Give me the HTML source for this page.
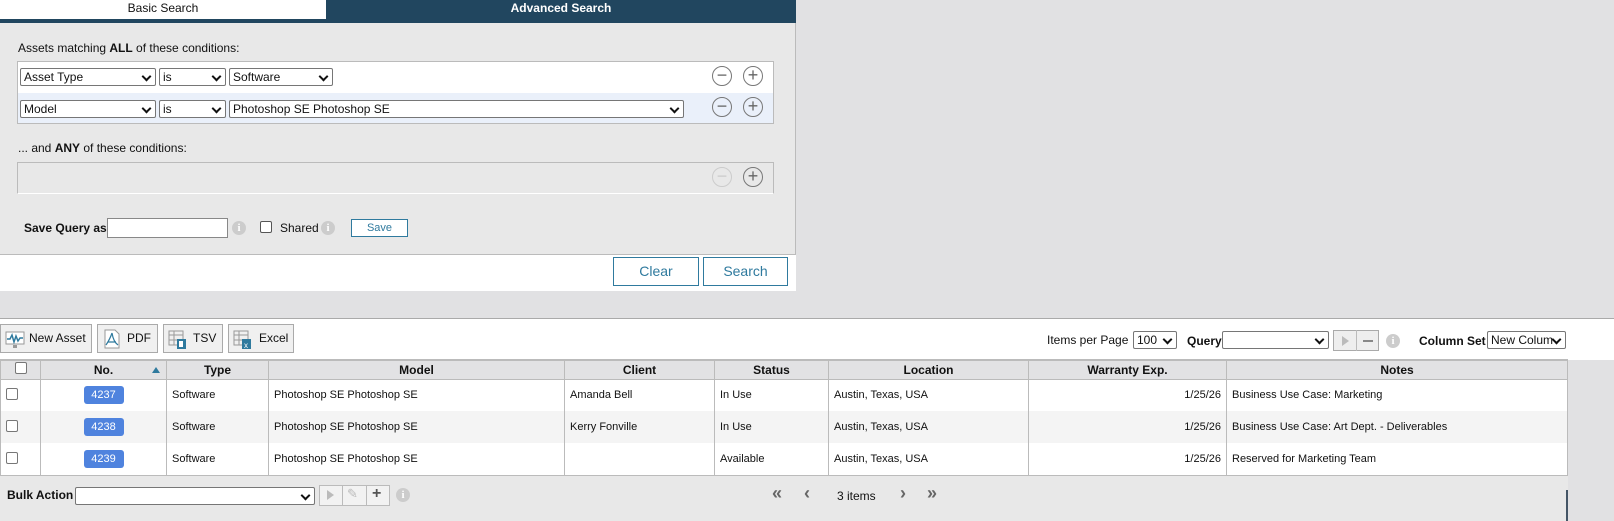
<!DOCTYPE html>
<html><head><style>
*{box-sizing:border-box;margin:0;padding:0}
body{width:1614px;height:521px;background:#e1e1e3;font-family:"Liberation Sans",Arial,sans-serif;font-size:12px;color:#111;position:relative;overflow:hidden}
.a{position:absolute}
.sel{position:absolute;background:#fff;border:1px solid #767676;border-radius:2px;height:18px;font-size:12px;padding:1px 3px;line-height:14px}
.sel:after{content:"";position:absolute;right:5px;top:4px;width:5px;height:5px;border-right:2px solid #111;border-bottom:2px solid #111;transform:rotate(45deg)}
.circ{position:absolute;width:20px;height:20px;border:1.5px solid #777;border-radius:50%;text-align:center;line-height:16px;font-size:18px;color:#666}
.btn{position:absolute;border:1px solid #aaa;background:#f0f0f0;height:29px;line-height:27px;font-size:12px}
th,td{font-size:11px}
table{border-collapse:collapse;position:absolute;left:0;top:359px;width:1568px}
th{background:#e2e2e4;height:19px;font-size:12px;border:1px solid #bbb;border-top:2px solid #bbb}
td{height:32px;border-left:1px solid #bbb;border-right:1px solid #bbb;padding:0 5px;background:#fff}
tr.g td{background:#f4f4f4}
.cb{display:inline-block;width:12px;height:12px;border:1px solid #777;border-radius:2px;background:#fff}
.badge{display:inline-block;background:#4f83de;color:#fff;border-radius:3px;width:40px;height:18px;line-height:18px;text-align:center;font-size:11px}
.info{position:absolute;width:14px;height:14px;border-radius:50%;background:#ccc;color:#fff;font-size:11px;font-weight:bold;text-align:center;line-height:14px;font-family:"Liberation Serif",serif}
.pg{position:absolute;top:483px;font-size:18px;color:#666;font-weight:bold}
</style></head><body>
<div class="a" style="left:0;top:0;width:796px;height:291px;background:#e8e8e8;border-right:1px solid #bbb;border-bottom:1px solid #aaa"></div>
<div class="a" style="left:0;top:0;width:326px;height:19px;background:#fff;text-align:center;line-height:17px">Basic Search</div>
<div class="a" style="left:326px;top:0;width:470px;height:19px;background:#21465f;color:#fff;text-align:center;line-height:17px;font-weight:bold">Advanced Search</div>
<div class="a" style="left:0;top:19px;width:796px;height:4px;background:#21465f"></div>
<div class="a" style="left:18px;top:41px">Assets matching <b>ALL</b> of these conditions:</div>
<div class="a" style="left:17px;top:61px;width:757px;height:63px;background:#fff;border:1px solid #bbb"></div>
<div class="a" style="left:18px;top:93px;width:755px;height:30px;background:#eaf0fa"></div>
<div class="sel" style="left:20px;top:68px;width:136px">Asset Type</div>
<div class="sel" style="left:159px;top:68px;width:67px">is</div>
<div class="sel" style="left:229px;top:68px;width:104px">Software</div>
<div class="circ" style="left:712px;top:66px">−</div><div class="circ" style="left:743px;top:66px">+</div>
<div class="sel" style="left:20px;top:100px;width:136px">Model</div>
<div class="sel" style="left:159px;top:100px;width:67px">is</div>
<div class="sel" style="left:229px;top:100px;width:455px">Photoshop SE Photoshop SE</div>
<div class="circ" style="left:712px;top:97px">−</div><div class="circ" style="left:743px;top:97px">+</div>
<div class="a" style="left:18px;top:141px">... and <b>ANY</b> of these conditions:</div>
<div class="a" style="left:17px;top:162px;width:757px;height:32px;background:#e8e8e8;border:1px solid #bbb;border-bottom-color:#fff"></div>
<div class="circ" style="left:712px;top:167px;border-color:#ccc;color:#ccc">−</div><div class="circ" style="left:743px;top:167px">+</div>
<div class="a" style="left:24px;top:221px;font-weight:bold">Save Query as</div>
<div class="a" style="left:107px;top:218px;width:121px;height:20px;background:#fff;border:1px solid #888"></div>
<div class="info" style="left:232px;top:221px">i</div>
<div class="a" style="left:260px;top:221px;width:12px;height:12px;border:1px solid #555;border-radius:2px;background:#fff"></div>
<div class="a" style="left:280px;top:221px">Shared</div>
<div class="info" style="left:321px;top:221px">i</div>
<div class="a" style="left:351px;top:219px;width:57px;height:18px;border:1px solid #2f7a9e;background:#fff;color:#2f7a9e;font-size:11px;text-align:center;line-height:16px">Save</div>
<div class="a" style="left:0;top:254px;width:796px;height:37px;background:#fff;border-top:1px solid #bbb"></div>
<div class="a" style="left:613px;top:257px;width:86px;height:29px;border:1px solid #2f7a9e;background:#fff;color:#2f7a9e;font-size:14px;text-align:center;line-height:27px">Clear</div>
<div class="a" style="left:703px;top:257px;width:85px;height:29px;border:1px solid #2f7a9e;background:#fff;color:#2f7a9e;font-size:14px;text-align:center;line-height:27px">Search</div>
<div class="a" style="left:0;top:318px;width:1614px;height:42px;background:#fff;border-top:1px solid #aaa"></div>
<div class="btn" style="left:0;top:324px;width:92px;padding-left:28px">New Asset<svg class="a" style="left:4px;top:6px" width="20" height="18"><rect x="1" y="1" width="18" height="12" fill="#fff" stroke="#999"/><path d="M2 8l3 0 2-4 2 7 2-6 2 5 2-3 3 0" fill="none" stroke="#2f7a9e" stroke-width="1.5"/><rect x="8" y="14" width="4" height="3" fill="#999"/></svg></div>
<div class="btn" style="left:97px;top:324px;width:61px;padding-left:29px">PDF<svg class="a" style="left:6px;top:4px" width="16" height="20"><path d="M1 1h10l4 4v14H1z" fill="#fff" stroke="#999"/><path d="M8 4c-2 6 -4 9-6 12M8 4c1 6 3 10 6 12M4 13h8" fill="none" stroke="#2f7a9e" stroke-width="1.2"/></svg></div>
<div class="btn" style="left:163px;top:324px;width:60px;padding-left:29px">TSV<svg class="a" style="left:4px;top:5px" width="20" height="20"><path d="M1 1h14v14H1zM1 5h14M6 1v14M1 10h14" fill="none" stroke="#999"/><rect x="9" y="9" width="9" height="10" fill="#2f7a9e"/><rect x="11" y="11" width="4" height="6" fill="#fff"/></svg></div>
<div class="btn" style="left:228px;top:324px;width:66px;padding-left:30px">Excel<svg class="a" style="left:4px;top:5px" width="20" height="20"><path d="M1 1h14v14H1zM1 5h14M6 1v14M1 10h14" fill="none" stroke="#999"/><rect x="9" y="9" width="9" height="10" fill="#2f7a9e"/><text x="11" y="18" font-size="8" fill="#fff" font-family="Liberation Sans">x</text></svg></div>
<div class="a" style="left:1047px;top:333px">Items per Page</div>
<div class="sel" style="left:1133px;top:331px;width:44px">100</div>
<div class="a" style="left:1187px;top:334px;font-weight:bold">Query</div>
<div class="sel" style="left:1222px;top:331px;width:107px"></div>
<div class="a" style="left:1333px;top:330px;width:46px;height:21px;border:1px solid #aaa;background:#eee"></div>
<div class="a" style="left:1356px;top:330px;width:1px;height:21px;background:#bbb"></div>
<div class="a" style="left:1342px;top:336px;border-left:7px solid #bbb;border-top:5px solid transparent;border-bottom:5px solid transparent"></div>
<div class="a" style="left:1363px;top:340px;width:10px;height:2px;background:#888"></div>
<div class="info" style="left:1386px;top:334px">i</div>
<div class="a" style="left:1419px;top:334px;font-weight:bold">Column Set</div>
<div class="sel" style="left:1487px;top:331px;width:79px;overflow:hidden;white-space:nowrap">New Colum</div>
<table>
<tr><th style="width:40px"><span class="cb"></span></th><th style="width:126px;position:relative">No.<span style="position:absolute;right:6px;top:6px;border-bottom:6px solid #2f7a9e;border-left:4px solid transparent;border-right:4px solid transparent"></span></th><th style="width:102px">Type</th><th style="width:296px">Model</th><th style="width:150px">Client</th><th style="width:114px">Status</th><th style="width:200px">Location</th><th style="width:198px">Warranty Exp.</th><th>Notes</th></tr>
<tr><td><span class="cb"></span></td><td style="text-align:center"><span class="badge">4237</span></td><td>Software</td><td>Photoshop SE Photoshop SE</td><td>Amanda Bell</td><td>In Use</td><td>Austin, Texas, USA</td><td style="text-align:right">1/25/26</td><td>Business Use Case: Marketing</td></tr>
<tr class="g"><td><span class="cb"></span></td><td style="text-align:center"><span class="badge">4238</span></td><td>Software</td><td>Photoshop SE Photoshop SE</td><td>Kerry Fonville</td><td>In Use</td><td>Austin, Texas, USA</td><td style="text-align:right">1/25/26</td><td>Business Use Case: Art Dept. - Deliverables</td></tr>
<tr><td><span class="cb"></span></td><td style="text-align:center"><span class="badge">4239</span></td><td>Software</td><td>Photoshop SE Photoshop SE</td><td></td><td>Available</td><td>Austin, Texas, USA</td><td style="text-align:right">1/25/26</td><td>Reserved for Marketing Team</td></tr>
</table>
<div class="a" style="left:0;top:475px;width:1568px;height:46px;background:#e8e8e8;border-top:1px solid #bbb"></div>
<div class="a" style="left:1566px;top:490px;width:2px;height:31px;background:#456"></div>
<div class="a" style="left:7px;top:488px;font-weight:bold">Bulk Action</div>
<div class="sel" style="left:75px;top:487px;width:240px"></div>
<div class="a" style="left:319px;top:485px;width:71px;height:21px;border:1px solid #bbb;background:#f2f2f2"></div>
<div class="a" style="left:342px;top:485px;width:1px;height:21px;background:#bbb"></div>
<div class="a" style="left:366px;top:485px;width:1px;height:21px;background:#bbb"></div>
<div class="a" style="left:327px;top:490px;border-left:7px solid #bbb;border-top:5px solid transparent;border-bottom:5px solid transparent"></div>
<div class="a" style="left:347px;top:486px;color:#bbb;font-size:13px">✎</div>
<div class="a" style="left:372px;top:485px;font-size:16px;color:#555;font-weight:bold">+</div>
<div class="info" style="left:396px;top:488px">i</div>
<div class="pg" style="left:772px">«</div>
<div class="pg" style="left:804px">‹</div>
<div class="a" style="left:837px;top:489px">3 items</div>
<div class="pg" style="left:900px">›</div>
<div class="pg" style="left:927px">»</div>
</body></html>
